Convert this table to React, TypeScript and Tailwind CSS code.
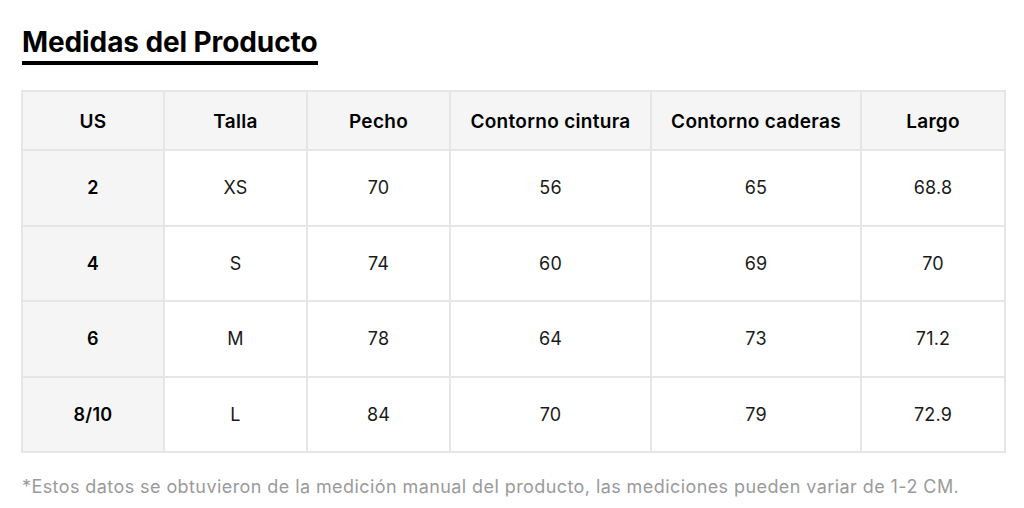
import React from "react";

const headers = ["US", "Talla", "Pecho", "Contorno cintura", "Contorno caderas", "Largo"];
const rows = [
  ["2", "XS", "70", "56", "65", "68.8"],
  ["4", "S", "74", "60", "69", "70"],
  ["6", "M", "78", "64", "73", "71.2"],
  ["8/10", "L", "84", "70", "79", "72.9"],
];

export default function App() {
  return (
    <div
      className="w-[1024px] h-[508px] bg-white overflow-hidden text-[#111]"
      style={{ fontFamily: "Inter, 'Noto Sans', sans-serif" }}
    >
      <div className="pl-[22px] pt-[25px]">
        <div className="inline-block border-b-[4px] border-black pb-[2px]">
          <h1 className="text-[28px] leading-[34px] font-bold tracking-[-0.1px] text-black">
            Medidas del Producto
          </h1>
        </div>
      </div>
      <div className="ml-[21px] mt-[25px] w-[985px] bg-[#e6e6e6] p-[2px] grid grid-cols-[140px_141px_141px_199px_208px_142px] gap-[2px]">
        {headers.map((h) => (
          <div
            key={h}
            className="h-[57px] pt-[3px] bg-[#f5f5f5] flex items-center justify-center text-[19px] tracking-[0.3px] font-semibold text-black"
          >
            {h}
          </div>
        ))}
        {rows.map((r, ri) =>
          r.map((c, ci) => (
            <div
              key={ri + "-" + ci}
              className={
                ci === 0
                  ? "h-[73.5px] bg-[#f5f5f5] flex items-center justify-center text-[18px] tracking-[0.3px] font-semibold text-black"
                  : "h-[73.5px] bg-white flex items-center justify-center text-[18px] tracking-[0.2px] text-[#1a1a1a]"
              }
            >
              {c}
            </div>
          ))
        )}
      </div>
      <p className="ml-[22px] mt-[22px] text-[18px] leading-[24px] text-[#9a9a9a] tracking-[0.42px]">
        *Estos datos se obtuvieron de la medición manual del producto, las mediciones pueden variar de 1-2 CM.
      </p>
    </div>
  );
}
